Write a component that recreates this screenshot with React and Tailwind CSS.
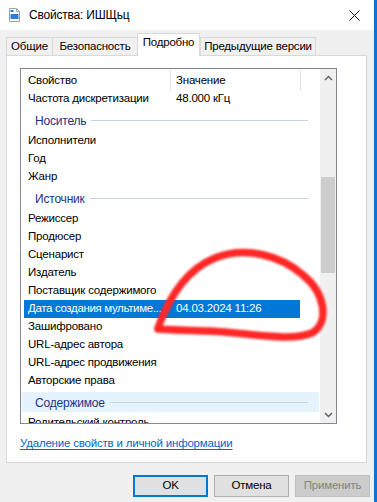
import React from "react";

const rows = [
  { t: "row", a: "Частота дискретизации", b: "48.000 кГц" },
  { t: "group", a: "Носитель" },
  { t: "row", a: "Исполнители" },
  { t: "row", a: "Год" },
  { t: "row", a: "Жанр" },
  { t: "group", a: "Источник" },
  { t: "row", a: "Режиссер" },
  { t: "row", a: "Продюсер" },
  { t: "row", a: "Сценарист" },
  { t: "row", a: "Издатель" },
  { t: "row", a: "Поставщик содержимого" },
  { t: "row", a: "Дата создания мультиме...", b: "04.03.2024 11:26", sel: true },
  { t: "row", a: "Зашифровано" },
  { t: "row", a: "URL-адрес автора" },
  { t: "row", a: "URL-адрес продвижения" },
  { t: "row", a: "Авторские права" },
  { t: "group", a: "Содержимое", hover: true },
  { t: "row", a: "Родительский контроль" },
];

function Row({ r }) {
  if (r.t === "group") {
    return (
      <div className="h-[24px] shrink-0 flex items-center mx-[1px]">
        <div
          className={
            "h-[20px] w-full flex items-center pl-[13px] pr-[11px] gap-[5px] " +
            (r.hover ? "bg-[#e5f3ff]" : "")
          }
        >
          <span className="text-[#1e3287] text-[12px] pt-[1px] whitespace-nowrap">{r.a}</span>
          <div className="flex-1 h-px bg-[#c9d3e0]" />
        </div>
      </div>
    );
  }
  return (
    <div className="h-[18px] shrink-0 flex items-center">
      <div
        className={
          "ml-[3px] w-[276px] h-full flex items-center " +
          (r.sel ? "bg-[#0078d7] text-white" : "text-black")
        }
      >
        <span
          className={
            "w-[146px] shrink-0 pl-[4px] whitespace-nowrap " +
            (r.sel ? "tracking-[-0.35px]" : "")
          }
        >
          {r.a}
        </span>
        {r.b ? <span className="pl-[6px] whitespace-nowrap">{r.b}</span> : null}
      </div>
    </div>
  );
}

function Tab({ label, w, sel }) {
  if (sel) {
    return (
      <div
        className="h-[23px] -mb-px z-10 bg-white border border-b-0 border-[#d9d9d9] flex items-start justify-center pt-[3px] text-black whitespace-nowrap shrink-0"
        style={{ width: w }}
      >
        {label}
      </div>
    );
  }
  return (
    <div
      className="h-[18px] bg-[#f0f0f0] border border-b-0 border-r-0 border-[#d9d9d9] flex items-center justify-center text-black pt-[1px] whitespace-nowrap shrink-0"
      style={{ width: w }}
    >
      {label}
    </div>
  );
}

function Btn({ children, kind }) {
  let cls = "bg-[#e1e1e1] border border-[#adadad] text-black";
  if (kind === "def") cls = "bg-[#e1e1e1] border-2 border-[#0078d7] text-black";
  if (kind === "dis") cls = "bg-[#cccccc] border border-[#bfbfbf] text-[#838383]";
  return (
    <div className={"w-[75px] h-[22px] flex items-center justify-center " + cls}>
      {children}
    </div>
  );
}

export default function App() {
  return (
    <div className="w-[377px] h-[502px] relative overflow-hidden flex font-['Liberation_Sans',Arial,sans-serif] text-[11.5px] tracking-[-0.2px] leading-none">
      <div className="w-[374px] h-full bg-[#f0f0f0] flex flex-col">
        {/* Title bar */}
        <div className="h-[30px] bg-white flex items-center shrink-0">
          <svg width="11" height="14" viewBox="0 0 11 14" className="ml-[9px]">
            <path d="M0.5 0.5 H7.5 L10.5 3.5 V13.5 H0.5 Z" fill="#fff" stroke="#9aa3ad" />
            <path d="M7.5 0.5 V3.5 H10.5" fill="none" stroke="#9aa3ad" />
            <rect x="1.5" y="6" width="8" height="5" fill="#2f7fd6" />
            <rect x="1.5" y="2" width="3" height="2" fill="#2f7fd6" />
          </svg>
          <span className="ml-[9px] text-[12px] text-black">Свойства: ИШЩьц</span>
          <svg width="11" height="11" viewBox="0 0 11 11" className="ml-auto mr-[14px]">
            <path d="M0.5 0.5 L10.5 10.5 M10.5 0.5 L0.5 10.5" stroke="#111" strokeWidth="1" />
          </svg>
        </div>

        {/* Tabs */}
        <div className="flex items-end pl-[6px] pt-[3px] h-[25px] shrink-0">
          <Tab label="Общие" w={46} />
          <Tab label="Безопасность" w={85} />
          <Tab label="Подробно" w={63} sel />
          <div className="border-r border-[#d9d9d9] h-[18px] flex">
            <Tab label="Предыдущие версии" w={115} />
          </div>
        </div>

        {/* Panel */}
        <div className="ml-[6px] w-[361px] h-[408px] bg-white border border-[#d9d9d9] flex flex-col shrink-0 pt-[12px] pl-[13px]">
          <div className="w-[317px] h-[356px] shrink-0 border border-[#828790] flex overflow-hidden">
            <div className="w-[299px] h-full flex flex-col overflow-hidden">
              <div className="h-[21px] flex items-center shrink-0 pt-[2px]">
                <div className="w-[149px] pl-[7px]">Свойство</div>
                <div className="w-px h-[21px] bg-[#e5e5e5]" />
                <div className="w-[129px] pl-[5px]">Значение</div>
                <div className="w-px h-[21px] bg-[#e5e5e5]" />
              </div>
              {rows.map((r, i) => (
                <Row key={i} r={r} />
              ))}
            </div>
            <div className="w-[16px] h-full bg-[#f0f0f0] flex flex-col">
              <div className="h-[17px] shrink-0 flex items-center justify-center">
                <svg width="9" height="6" viewBox="0 0 9 6">
                  <path d="M1 5 L4.5 1.5 L8 5" fill="none" stroke="#606060" strokeWidth="1.4" />
                </svg>
              </div>
              <div className="h-[91px] shrink-0" />
              <div className="h-[96px] shrink-0 mx-[1px] bg-[#cdcdcd]" />
              <div className="flex-1" />
              <div className="h-[17px] shrink-0 flex items-center justify-center">
                <svg width="9" height="6" viewBox="0 0 9 6">
                  <path d="M1 1 L4.5 4.5 L8 1" fill="none" stroke="#606060" strokeWidth="1.4" />
                </svg>
              </div>
            </div>
          </div>
          <div className="mt-[12px] text-[#0066cc] underline underline-offset-2 h-[16px] flex items-center">
            Удаление свойств и личной информации
          </div>
        </div>

        {/* Buttons */}
        <div className="flex gap-[6px] pl-[133px] mt-[12px]">
          <Btn kind="def">OK</Btn>
          <Btn>Отмена</Btn>
          <Btn kind="dis">Применить</Btn>
        </div>
      </div>
      <div className="w-[3px] h-full bg-[#1a6fc9]" />

      {/* Red annotation */}
      <svg
        className="absolute left-0 top-0 pointer-events-none"
        width="377"
        height="502"
        viewBox="0 0 377 502"
      >
        <defs>
          <filter id="soft" x="-10%" y="-10%" width="120%" height="120%">
            <feGaussianBlur stdDeviation="0.9" />
          </filter>
        </defs>
        <path
          d="M158 328 C168 300, 185 270, 215 258 C245 246, 280 255, 303 275 C325 293, 330 322, 312 333 C290 342, 250 333, 210 331 C185 330, 168 330, 158 329"
          fill="none"
          stroke="#ff2626"
          strokeWidth="7.5"
          strokeLinecap="round"
          strokeLinejoin="round"
          filter="url(#soft)"
        />
      </svg>
    </div>
  );
}
